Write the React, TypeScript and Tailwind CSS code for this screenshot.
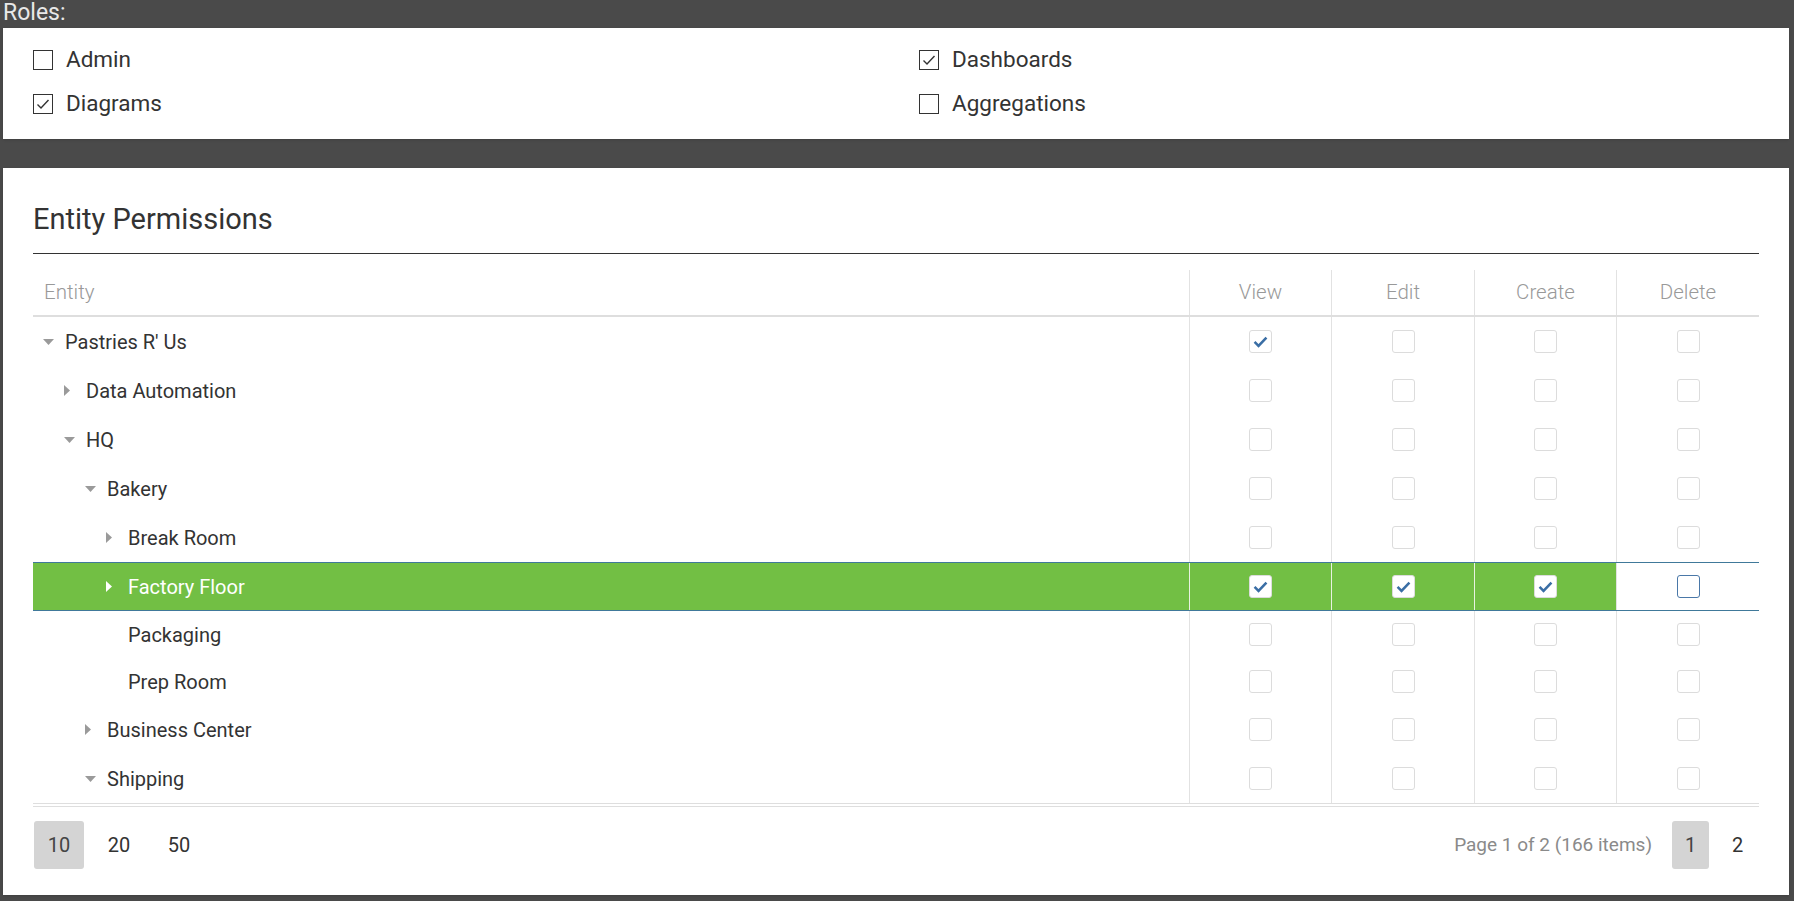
import React from 'react';

type Node = {
  name: string;
  level: number;
  state: 'open' | 'closed' | 'leaf';
  perms: boolean[];
  selected?: boolean;
};

const rows: Node[] = [
  { name: "Pastries R' Us", level: 0, state: 'open', perms: [true, false, false, false] },
  { name: 'Data Automation', level: 1, state: 'closed', perms: [false, false, false, false] },
  { name: 'HQ', level: 1, state: 'open', perms: [false, false, false, false] },
  { name: 'Bakery', level: 2, state: 'open', perms: [false, false, false, false] },
  { name: 'Break Room', level: 3, state: 'closed', perms: [false, false, false, false] },
  { name: 'Factory Floor', level: 3, state: 'closed', perms: [true, true, true, false], selected: true },
  { name: 'Packaging', level: 3, state: 'leaf', perms: [false, false, false, false] },
  { name: 'Prep Room', level: 3, state: 'leaf', perms: [false, false, false, false] },
  { name: 'Business Center', level: 2, state: 'closed', perms: [false, false, false, false] },
  { name: 'Shipping', level: 2, state: 'open', perms: [false, false, false, false] },
];

const indent = ['pl-[10px]', 'pl-[31px]', 'pl-[52px]', 'pl-[73px]'];

const RoleCheck = ({ label, checked }: { label: string; checked?: boolean }) => (
  <div className="flex h-[44px] items-center gap-[13px]">
    <span className="flex h-[20px] w-[20px] items-center justify-center border border-[#333]">
      {checked && (
        <svg width="16" height="16" viewBox="0 0 16 16" fill="none">
          <path d="M2.5 8.5l3.5 3.5 7.5-8" stroke="#333" strokeWidth="1.4" />
        </svg>
      )}
    </span>
    <span className="text-[22.5px] text-[#333]">{label}</span>
  </div>
);

const GridCheck = ({ checked, focus }: { checked: boolean; focus?: boolean }) => (
  <span
    className={
      'flex h-[23px] w-[23px] items-center justify-center rounded-[3px] border bg-white ' +
      (focus ? 'border-[#4a78a8]' : 'border-[#dcdcdc]')
    }
  >
    {checked && (
      <svg width="19" height="19" viewBox="0 0 24 24" fill="none">
        <path d="M4.5 12.5l5 5 10-10.5" stroke="#3a6ea5" strokeWidth="3.2" />
      </svg>
    )}
  </span>
);

const Arrow = ({ state, white }: { state: Node['state']; white?: boolean }) => {
  const c = white ? '#ffffff' : '#9a9a9a';
  if (state === 'open')
    return (
      <svg width="11" height="6" viewBox="0 0 11 6">
        <path d="M0 0h11L5.5 6z" fill={c} />
      </svg>
    );
  if (state === 'closed')
    return (
      <svg width="6" height="11" viewBox="0 0 6 11">
        <path d="M0 0l6 5.5-6 5.5z" fill={c} />
      </svg>
    );
  return null;
};

const cols = 'grid grid-cols-[1fr_142px_143px_142px_143px]';

export default function App() {
  return (
    <div className="h-[901px] overflow-hidden bg-[#4a4a4a] font-['Roboto',sans-serif]">
      <div className="h-[28px] pl-[3px] text-[23px] leading-[26px] text-[#e8e8e8]">Roles:</div>

      <div className="ml-[3px] mr-[5px] grid grid-cols-[886px_1fr] bg-white pb-[13px] pl-[30px] pt-[10px] shadow">
        <RoleCheck label="Admin" />
        <RoleCheck label="Dashboards" checked />
        <RoleCheck label="Diagrams" checked />
        <RoleCheck label="Aggregations" />
      </div>

      <div className="ml-[3px] mr-[5px] mt-[29px] bg-white px-[30px] pb-[26px] pt-[35px] shadow">
        <div className="border-b border-[#333] pb-[18px] text-[29px] leading-8 text-[#333]">Entity Permissions</div>

        <div className="mt-[16px]">
          <div className={cols + ' h-[47px] border-b-2 border-[#dedede] text-[20.5px] font-light text-[#999]'}>
            <div className="flex items-center pl-[11px]">Entity</div>
            {['View', 'Edit', 'Create', 'Delete'].map((h) => (
              <div key={h} className="flex items-center justify-center border-l border-[#e2e2e2]">
                {h}
              </div>
            ))}
          </div>

          <div className="h-[487px] overflow-hidden border-b border-[#dedede]">
            {rows.map((r) => (
              <div
                key={r.name}
                className={
                  cols +
                  (r.state === 'leaf' ? ' h-[47px] ' : ' h-[49px] ') +
                  (r.selected ? 'border-y border-[#40799a]' : '')
                }
              >
                <div
                  className={
                    'flex items-center text-[20px] ' +
                    indent[r.level] +
                    (r.selected ? ' bg-[#72bf44] text-white' : ' text-[#333]')
                  }
                >
                  <span className="flex w-[22px] items-center">
                    <Arrow state={r.state} white={r.selected} />
                  </span>
                  {r.name}
                </div>
                {r.perms.map((p, i) => {
                  const green = r.selected && i < 3;
                  const focus = r.selected && i === 3;
                  return (
                    <div
                      key={i}
                      className={
                        'flex items-center justify-center border-l ' +
                        (green ? 'border-[#e8f2e0] bg-[#72bf44]' : 'border-[#e2e2e2]')
                      }
                    >
                      <GridCheck checked={p} focus={focus} />
                    </div>
                  );
                })}
              </div>
            ))}
          </div>

          <div className="mt-[2px] flex items-center justify-between border-t border-[#dedede] pl-[1px] pr-[3px] pt-[14px] text-[20px] text-[#333]">
            <div className="flex gap-[10px]">
              <span className="flex h-[48px] w-[50px] items-center justify-center rounded-[3px] bg-[#d4d4d4] text-[#444]">10</span>
              <span className="flex h-[48px] w-[50px] items-center justify-center">20</span>
              <span className="flex h-[48px] w-[50px] items-center justify-center">50</span>
            </div>
            <div className="flex items-center">
              <span className="mr-[20px] text-[19px] text-[#8a8a8a]">Page 1 of 2 (166 items)</span>
              <div className="flex gap-[10px]">
                <span className="flex h-[48px] w-[37px] items-center justify-center rounded-[3px] bg-[#d4d4d4] text-[#444]">1</span>
                <span className="flex h-[48px] w-[37px] items-center justify-center">2</span>
              </div>
            </div>
          </div>
        </div>
      </div>
    </div>
  );
}
